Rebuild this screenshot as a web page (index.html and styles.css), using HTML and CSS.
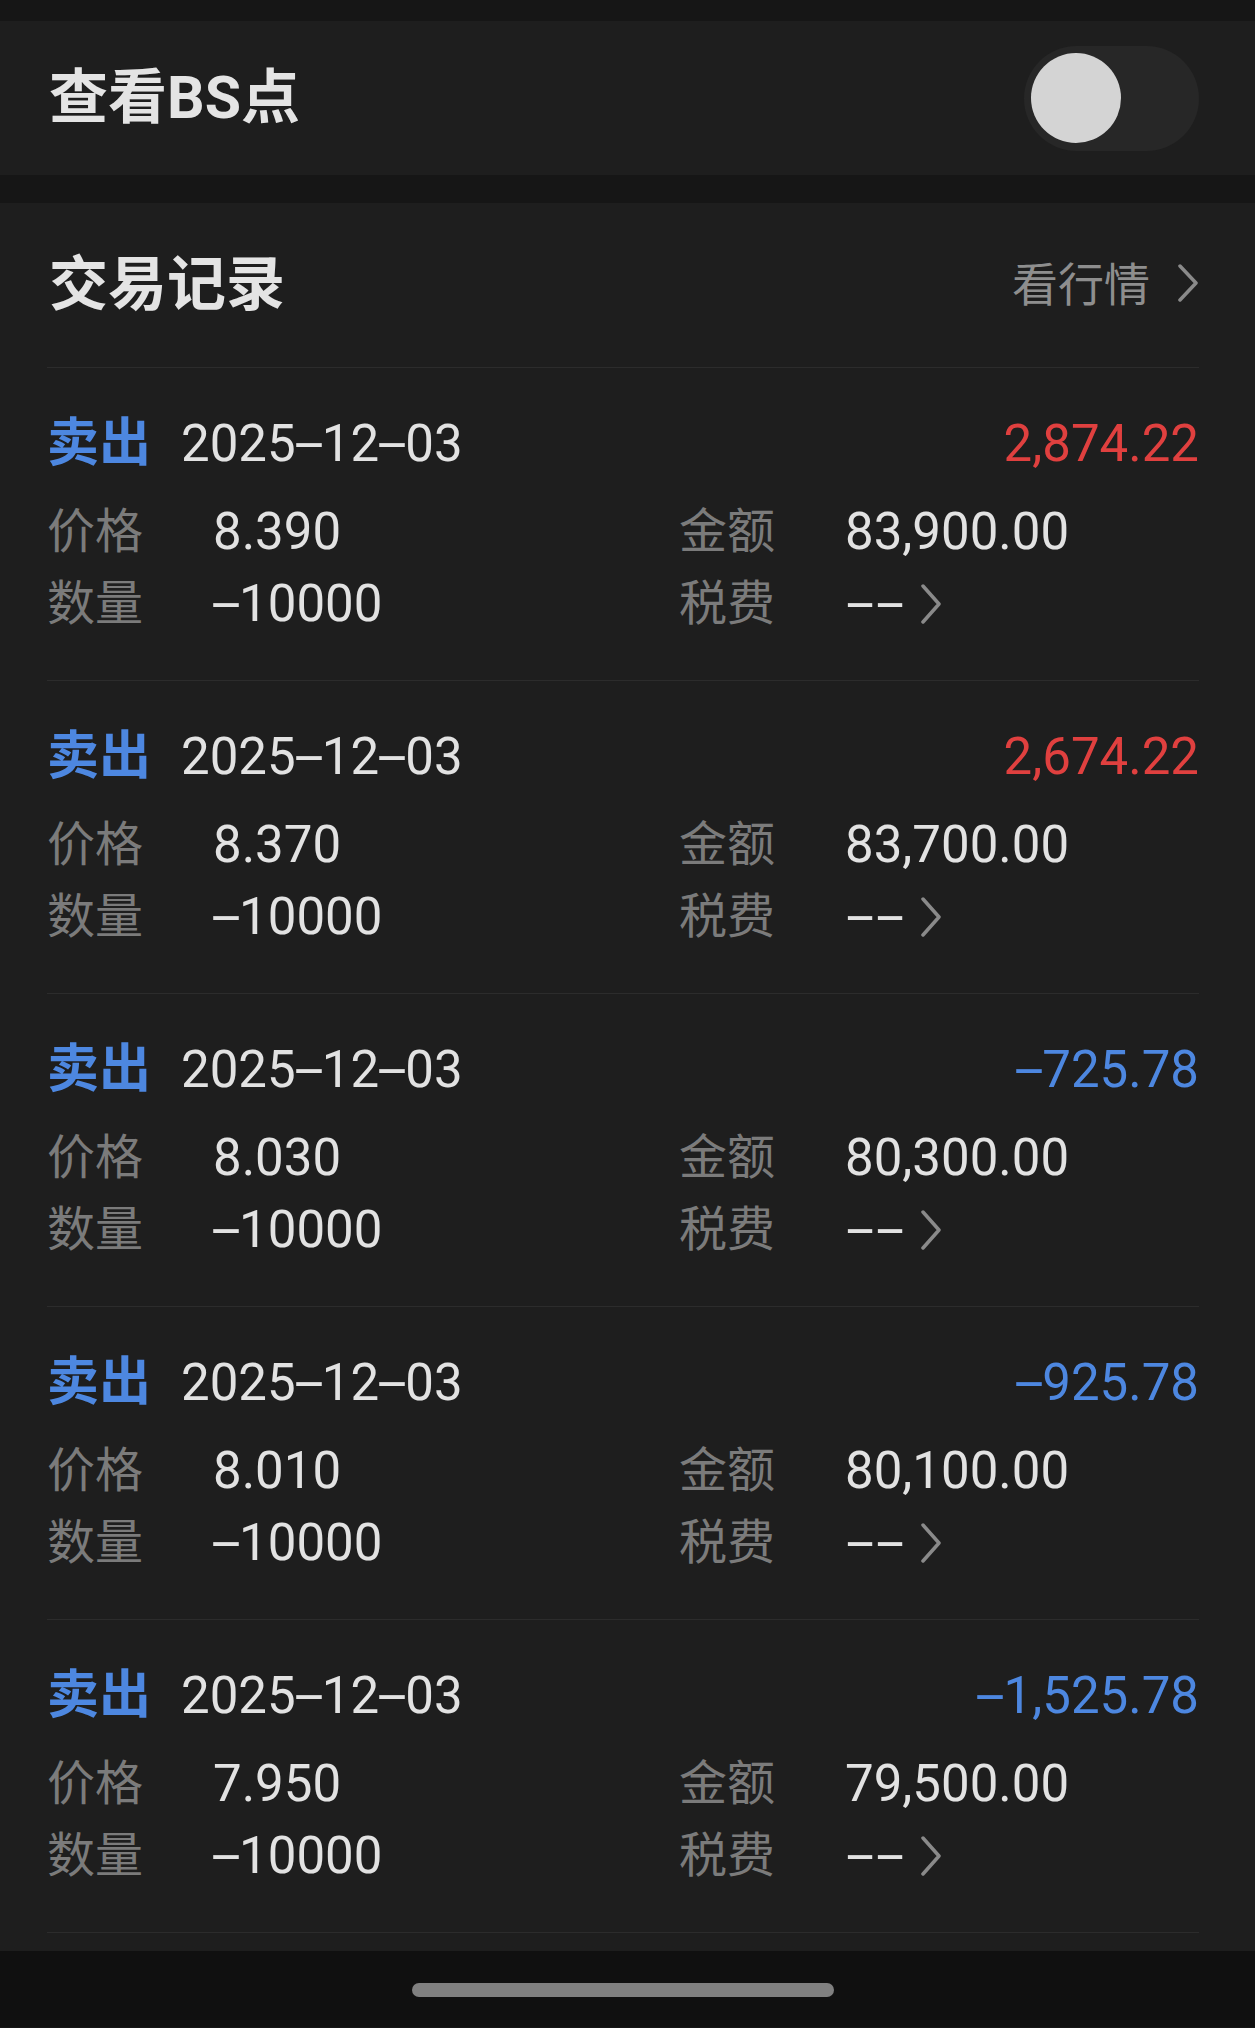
FILE: index.html
```html
<!DOCTYPE html>
<html lang="zh-CN">
<head>
<meta charset="utf-8">
<title>交易记录</title>
<link rel="stylesheet" href="styles.css">
</head>
<body>
<div class="page">
  <div class="topband"></div>

  <section class="panel bs-panel">
    <h2 class="title">查看BS点</h2>
    <div class="toggle"><div class="knob"></div></div>
  </section>

  <div class="gapband"></div>

  <section class="panel records">
    <div class="records-head">
      <h2 class="title">交易记录</h2>
      <div class="more">看行情<svg class="chev-lg" width="22" height="38" viewBox="0 0 22 38"><polyline points="3,2 19,19 3,36" fill="none" stroke="#8a8a8a" stroke-width="3.5" stroke-linecap="round" stroke-linejoin="round"/></svg></div>
    </div>

    <div class="record">
      <div class="rec-head">
        <span class="side">卖出</span>
        <span class="date">2025<span class="dash">-</span>12<span class="dash">-</span>03</span>
        <span class="pnl up">2,874.22</span>
      </div>
      <div class="rec-grid">
        <div class="field"><span class="label">价格</span><span class="val">8.390</span></div>
        <div class="field"><span class="label">金额</span><span class="val">83,900.00</span></div>
        <div class="field"><span class="label">数量</span><span class="val"><span class="dash">-</span>10000</span></div>
        <div class="field"><span class="label">税费</span><span class="val fee"><span class="dash">-</span><span class="dash">-</span></span><svg class="chev" width="22" height="40" viewBox="0 0 22 40"><polyline points="3,2 19,20 3,38" fill="none" stroke="#8a8a8a" stroke-width="3.5" stroke-linecap="round" stroke-linejoin="round"/></svg></div>
      </div>
    </div>

    <div class="record">
      <div class="rec-head">
        <span class="side">卖出</span>
        <span class="date">2025<span class="dash">-</span>12<span class="dash">-</span>03</span>
        <span class="pnl up">2,674.22</span>
      </div>
      <div class="rec-grid">
        <div class="field"><span class="label">价格</span><span class="val">8.370</span></div>
        <div class="field"><span class="label">金额</span><span class="val">83,700.00</span></div>
        <div class="field"><span class="label">数量</span><span class="val"><span class="dash">-</span>10000</span></div>
        <div class="field"><span class="label">税费</span><span class="val fee"><span class="dash">-</span><span class="dash">-</span></span><svg class="chev" width="22" height="40" viewBox="0 0 22 40"><polyline points="3,2 19,20 3,38" fill="none" stroke="#8a8a8a" stroke-width="3.5" stroke-linecap="round" stroke-linejoin="round"/></svg></div>
      </div>
    </div>

    <div class="record">
      <div class="rec-head">
        <span class="side">卖出</span>
        <span class="date">2025<span class="dash">-</span>12<span class="dash">-</span>03</span>
        <span class="pnl down"><span class="dash">-</span>725.78</span>
      </div>
      <div class="rec-grid">
        <div class="field"><span class="label">价格</span><span class="val">8.030</span></div>
        <div class="field"><span class="label">金额</span><span class="val">80,300.00</span></div>
        <div class="field"><span class="label">数量</span><span class="val"><span class="dash">-</span>10000</span></div>
        <div class="field"><span class="label">税费</span><span class="val fee"><span class="dash">-</span><span class="dash">-</span></span><svg class="chev" width="22" height="40" viewBox="0 0 22 40"><polyline points="3,2 19,20 3,38" fill="none" stroke="#8a8a8a" stroke-width="3.5" stroke-linecap="round" stroke-linejoin="round"/></svg></div>
      </div>
    </div>

    <div class="record">
      <div class="rec-head">
        <span class="side">卖出</span>
        <span class="date">2025<span class="dash">-</span>12<span class="dash">-</span>03</span>
        <span class="pnl down"><span class="dash">-</span>925.78</span>
      </div>
      <div class="rec-grid">
        <div class="field"><span class="label">价格</span><span class="val">8.010</span></div>
        <div class="field"><span class="label">金额</span><span class="val">80,100.00</span></div>
        <div class="field"><span class="label">数量</span><span class="val"><span class="dash">-</span>10000</span></div>
        <div class="field"><span class="label">税费</span><span class="val fee"><span class="dash">-</span><span class="dash">-</span></span><svg class="chev" width="22" height="40" viewBox="0 0 22 40"><polyline points="3,2 19,20 3,38" fill="none" stroke="#8a8a8a" stroke-width="3.5" stroke-linecap="round" stroke-linejoin="round"/></svg></div>
      </div>
    </div>

    <div class="record">
      <div class="rec-head">
        <span class="side">卖出</span>
        <span class="date">2025<span class="dash">-</span>12<span class="dash">-</span>03</span>
        <span class="pnl down"><span class="dash">-</span>1,525.78</span>
      </div>
      <div class="rec-grid">
        <div class="field"><span class="label">价格</span><span class="val">7.950</span></div>
        <div class="field"><span class="label">金额</span><span class="val">79,500.00</span></div>
        <div class="field"><span class="label">数量</span><span class="val"><span class="dash">-</span>10000</span></div>
        <div class="field"><span class="label">税费</span><span class="val fee"><span class="dash">-</span><span class="dash">-</span></span><svg class="chev" width="22" height="40" viewBox="0 0 22 40"><polyline points="3,2 19,20 3,38" fill="none" stroke="#8a8a8a" stroke-width="3.5" stroke-linecap="round" stroke-linejoin="round"/></svg></div>
      </div>
    </div>
  </section>

  <footer class="navbar"><div class="home-indicator"></div></footer>
</div>
</body>
</html>
```

FILE: styles.css
```css
* { box-sizing: border-box; }

html, body {
  margin: 0;
  padding: 0;
  background: #161616;
}

body {
  font-family: "Roboto", "Noto Sans CJK SC", sans-serif;
  color: #e2e2e2;
}

.page {
  width: 1255px;
  display: flex;
  flex-direction: column;
}

.topband {
  height: 21px;
  background: #161616;
}

.gapband {
  height: 28px;
  background: #161616;
}

.panel {
  background: #1e1e1e;
  padding: 0 56px 0 47px;
}

.title {
  margin: 0;
  font-size: 59px;
  font-weight: 700;
  line-height: 62px;
  color: #e4e4e4;
  padding-left: 2px;
}

.bs-panel {
  height: 154px;
  display: flex;
  align-items: center;
  justify-content: space-between;
}

.toggle {
  width: 175px;
  height: 105px;
  border-radius: 53px;
  background: #272727;
  display: flex;
  align-items: center;
  padding: 0 7px;
}

.knob {
  width: 90px;
  height: 90px;
  border-radius: 50%;
  background: #d4d4d4;
}

.records {
  padding-bottom: 18px;
}

.records-head {
  height: 165px;
  display: flex;
  align-items: center;
  justify-content: space-between;
  border-bottom: 1px solid #2c2c2c;
}

.more {
  display: flex;
  align-items: center;
  font-size: 46px;
  line-height: 50px;
  color: #8e8e8e;
}

.chev-lg {
  margin-left: 27px;
  margin-top: -4px;
}

.record {
  height: 313px;
  padding-top: 46px;
  border-bottom: 1px solid #2c2c2c;
}

.rec-head {
  height: 60px;
  display: flex;
  align-items: center;
}

.side {
  font-size: 52px;
  font-weight: 700;
  color: #4d87e0;
  line-height: 60px;
}

.date {
  margin-left: 30px;
  font-size: 51px;
  line-height: 60px;
  color: #e2e2e2;
}

.pnl {
  margin-left: auto;
  font-size: 51px;
  line-height: 60px;
}

.pnl.up { color: #e0403f; }
.pnl.down { color: #4d87e0; }

.dash {
  display: inline-block;
  transform: scaleX(2.1);
  margin: 0 6px;
}

.rec-grid {
  margin-top: 22px;
  display: grid;
  grid-template-columns: 632px 1fr;
  grid-auto-rows: 72px;
}

.field {
  display: flex;
  align-items: center;
}

.label {
  width: 166px;
  font-size: 48px;
  line-height: 72px;
  color: #7b7b7b;
}

.val {
  font-size: 51px;
  line-height: 72px;
  color: #e2e2e2;
}

.fee .dash {
  transform: scaleX(2);
  margin: 0 8px;
}

.chev {
  margin-left: 15px;
}

.navbar {
  height: 76px;
  background: #101010;
  display: flex;
  justify-content: center;
  padding-top: 32px;
}

.home-indicator {
  width: 422px;
  height: 14px;
  border-radius: 7px;
  background: #808080;
  margin-right: 10px;
}
```
